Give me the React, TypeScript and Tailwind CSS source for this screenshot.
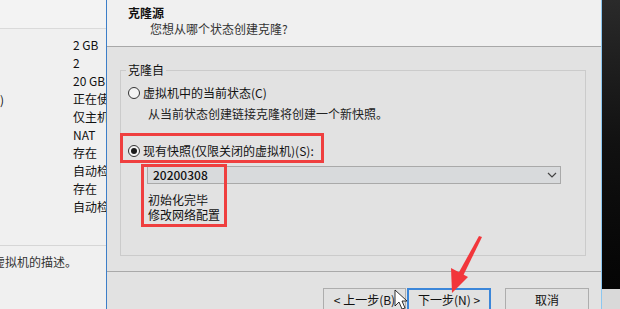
import React from 'react';

const font = { fontFamily: '"Noto Sans CJK SC", "Noto Sans", sans-serif' };

const values = ['2 GB', '2', '20 GB', '正在使用文件', '仅主机模式', 'NAT', '存在', '自动检测', '存在', '自动检测'];

function Radio({ checked }: { checked?: boolean }) {
  return (
    <span className="w-[12px] h-[12px] rounded-full border border-[#333] bg-[#f4f4f4] flex items-center justify-center shrink-0">
      {checked && <span className="w-[6px] h-[6px] rounded-full bg-[#1a1a1a]" />}
    </span>
  );
}

function Btn({ children, primary }: { children: React.ReactNode; primary?: boolean }) {
  return (
    <div
      className={
        'h-[23px] flex items-center justify-center text-[12px] text-[#111] bg-[#e1e1e1] ' +
        (primary ? 'border-2 border-[#3b86d9]' : 'border border-[#adadad]')
      }
    >
      {children}
    </div>
  );
}

export default function App() {
  return (
    <div className="relative w-[620px] h-[309px] overflow-hidden flex bg-[#f0f0f0]" style={font}>
      {/* background vm details panel */}
      <div className="w-[106px] shrink-0 overflow-hidden flex flex-col bg-[#f0f0f0] text-[12px] text-[#111] whitespace-nowrap">
        <div className="h-[29px] border-b border-[#dadada] bg-[#f3f3f3]" />
        <div className="relative h-[216px] pt-[7px]">
          <div className="absolute left-0 top-[62px] leading-[18px]">)</div>
          <div className="pl-[73px] leading-[18px]">
            {values.map((v, i) => (
              <div key={i}>{v}</div>
            ))}
          </div>
        </div>
        <div className="border-t border-[#d6d6d6] pt-[8px] leading-[16px] ml-[-7px] text-[#333]">虚拟机的描述。</div>
      </div>

      {/* wizard dialog */}
      <div className="w-[496px] shrink-0 flex flex-col border-l border-[#3c7ec8] border-r border-r-[#8cc7f0]">
        <div className="h-[47px] shrink-0 bg-[#f0f0f0] border-b border-[#a8a8a8] pl-[21px] pt-[5px] text-[12px] leading-[16px]">
          <div className="font-bold text-[#111]">克隆源</div>
          <div className="pl-[22px] text-[#333]">您想从哪个状态创建克隆?</div>
        </div>
        <div className="flex-1 bg-[#e2e2e2] flex flex-col">
          <div className="pt-[23px] px-[13px]">
            <div className="h-[186px] w-[466px] border border-[#cbcbcb] text-[12px] text-[#111] flex flex-col">
              <div className="self-start h-[16px] -mt-[9px] ml-[5px] px-[2px] bg-[#e2e2e2] leading-[16px]">克隆自</div>
              <div className="h-[16px] mt-[7px] pl-[7px] flex items-center gap-[3px] leading-[16px]">
                <Radio />
                <span>虚拟机中的当前状态(C)</span>
              </div>
              <div className="h-[16px] mt-[5px] pl-[27px] leading-[16px] text-[#222]">从当前状态创建链接克隆将创建一个新快照。</div>
              <div className="h-[16px] mt-[21px] pl-[7px] flex items-center gap-[3px] leading-[16px]">
                <Radio checked />
                <span>现有快照(仅限关闭的虚拟机)(S):</span>
              </div>
              <div className="mt-[7px] ml-[26px] w-[414px] h-[18px] shrink-0 bg-[#d8dadc] border border-[#a9a9a9] flex items-center justify-between pl-[5px] pr-[3px]">
                <span className="font-medium leading-[16px]">20200308</span>
                <svg width="10" height="6" viewBox="0 0 10 6">
                  <path d="M1 1 L5 5 L9 1" fill="none" stroke="#444" strokeWidth="1.2" />
                </svg>
              </div>
              <div className="mt-[8px] pl-[27px] leading-[15px]">
                <div className="h-[15px]">初始化完毕</div>
                <div className="h-[15px]">修改网络配置</div>
              </div>
            </div>
          </div>
          <div className="mt-[15px] border-t border-[#a9a9a9]" />
          <div className="pt-[16px] pr-[12px] flex justify-end">
            <div className="w-[83px]">
              <Btn>&lt; 上一步(B)</Btn>
            </div>
            <div className="w-[84px] ml-[1px]">
              <Btn primary>下一步(N) &gt;</Btn>
            </div>
            <div className="w-[84px] ml-[14px]">
              <Btn>取消</Btn>
            </div>
          </div>
        </div>
      </div>

      {/* desktop edge */}
      <div className="flex-1 flex flex-col">
        <div className="flex-1 bg-gradient-to-b from-[#2a2a2a] via-[#111] to-[#050505]" />
        <div className="h-[20px] bg-[#d9d9d9]" />
      </div>

      {/* annotations */}
      <div className="absolute left-[120px] top-[133px] w-[204px] h-[30px] border-[3px] border-[#ef3f3f]" />
      <div className="absolute left-[141px] top-[164px] w-[86px] h-[63px] border-[3px] border-[#ef3f3f]" />
      <svg className="absolute left-0 top-0" width="620" height="309" viewBox="0 0 620 309">
        <polygon points="482,237 463,276 458,274 479,236" fill="#f2363b" />
        <polygon points="452,293 451,268 468,277" fill="#f2363b" />
        <polygon points="395,290 395,306 399,302 402,309 405,308 402,301 407,301" fill="#fff" stroke="#000" strokeWidth="0.8" />
      </svg>
    </div>
  );
}
